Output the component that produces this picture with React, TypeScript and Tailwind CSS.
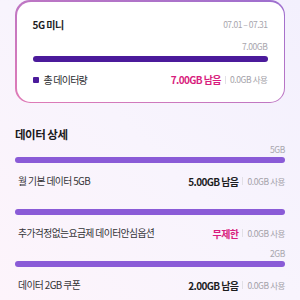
const font = { fontFamily: '"Noto Sans CJK KR", "Noto Sans", sans-serif' };

type Item = { cap: string; name: string; left: string; unlimited?: boolean };

const items: Item[] = [
  { cap: "5GB", name: "월 기본 데이터 5GB", left: "5.00GB 남음" },
  { cap: "", name: "추가걱정없는요금제 데이터안심옵션", left: "무제한", unlimited: true },
  { cap: "2GB", name: "데이터 2GB 쿠폰", left: "2.00GB 남음" },
];

function Used() {
  return (
    <>
      <span className="mx-[4px] h-[8px] w-px bg-[#e2e0e6]" />
      <span className="text-[8.5px] tracking-[-0.4px] text-[#a3a1a8]">0.0GB 사용</span>
    </>
  );
}

export default function App() {
  return (
    <div
      className="h-[300px] w-[300px] overflow-hidden bg-gradient-to-tr from-[#fdf4fb] via-[#f8f4fd] to-[#f3f0fd] px-[15px]"
      style={font}
    >
      {/* plan card */}
      <div className="rounded-[15px] bg-gradient-to-bl from-[#9d6fcf] to-[#e07bb6] p-[1.5px]">
        <div className="rounded-[14px] bg-white px-4 pb-[14px] pt-[15px]">
          <div className="flex h-4 items-center justify-between">
            <span className="text-[10px] font-bold tracking-[-0.5px] text-[#1d1d1f]">5G 미니</span>
            <span className="text-[8.5px] tracking-[-0.5px] text-[#a8a6ad]">07.01 – 07.31</span>
          </div>
          <div className="mt-2 flex h-3 items-center justify-end text-[8.5px] tracking-[-0.4px] text-[#a8a6ad]">
            7.00GB
          </div>
          <div className="mt-[3px] h-1.5 rounded-full bg-[#4b1a9b]" />
          <div className="mt-[10px] flex h-4 items-center justify-between">
            <div className="flex items-center">
              <span className="h-[6px] w-[6px] rounded-[1px] bg-[#4b1a9b]" />
              <span className="ml-[5px] text-[10px] tracking-[-0.8px] text-[#2a2a2e]">총 데이터량</span>
            </div>
            <div className="flex items-center">
              <span className="text-[10px] font-bold tracking-[-0.6px] text-[#d81e7e]">7.00GB 남음</span>
              <Used />
            </div>
          </div>
        </div>
      </div>

      {/* details */}
      <h2 className="mt-[23px] h-[17px] text-[11.5px] font-bold leading-[17px] tracking-[-0.5px] text-[#1a1a1c]">
        데이터 상세
      </h2>
      <div className="flex flex-col gap-[6px]">
        {items.map((it) => (
          <div key={it.name}>
            <div className="flex h-3 items-center justify-end text-[8.5px] tracking-[-0.4px] text-[#a8a6ad]">
              {it.cap}
            </div>
            <div className="mt-0.5 h-1.5 rounded-full bg-[#8a5bd7]" />
            <div className="mt-[10px] flex h-4 items-center justify-between pl-[3px]">
              <span className="text-[9.8px] tracking-[-0.6px] text-[#333336]">{it.name}</span>
              <div className="flex items-center">
                <span
                  className={
                    it.unlimited
                      ? "text-[10px] font-bold tracking-[-0.6px] text-[#d81e7e]"
                      : "text-[10px] font-bold tracking-[-0.6px] text-[#1d1d1f]"
                  }
                >
                  {it.left}
                </span>
                <Used />
              </div>
            </div>
          </div>
        ))}
      </div>
    </div>
  );
}
